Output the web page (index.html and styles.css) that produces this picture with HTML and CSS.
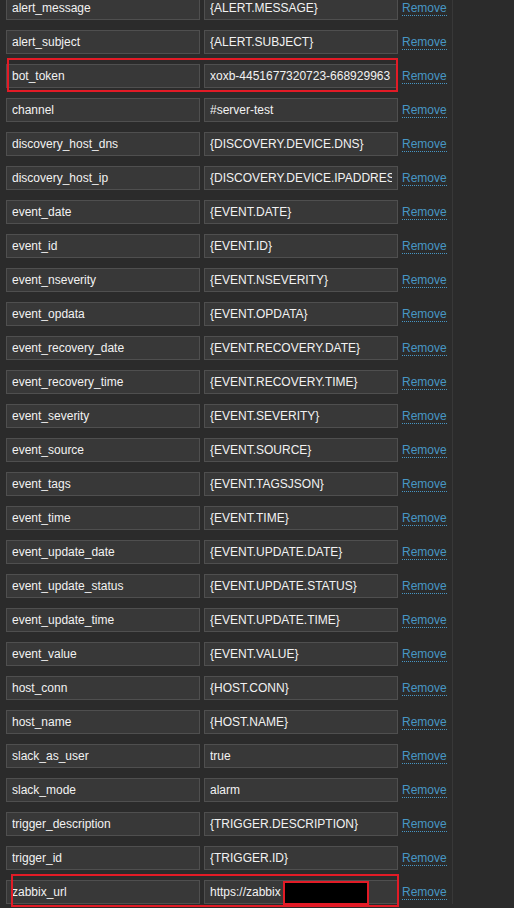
FILE: index.html
```html
<!DOCTYPE html>
<html lang="en">
<head>
<meta charset="utf-8">
<title>Macros</title>
<link rel="stylesheet" href="styles.css">
</head>
<body>
<div class="panel">
  <div class="list">
    <div class="row"><input class="field" type="text" value="alert_message"><input class="field" type="text" value="{ALERT.MESSAGE}"><a class="remove" href="#">Remove</a></div>
    <div class="row"><input class="field" type="text" value="alert_subject"><input class="field" type="text" value="{ALERT.SUBJECT}"><a class="remove" href="#">Remove</a></div>
    <div class="row"><input class="field" type="text" value="bot_token"><input class="field" type="text" value="xoxb-4451677320723-668929963"><a class="remove" href="#">Remove</a><span class="mark mark-token"></span></div>
    <div class="row"><input class="field" type="text" value="channel"><input class="field" type="text" value="#server-test"><a class="remove" href="#">Remove</a></div>
    <div class="row"><input class="field" type="text" value="discovery_host_dns"><input class="field" type="text" value="{DISCOVERY.DEVICE.DNS}"><a class="remove" href="#">Remove</a></div>
    <div class="row"><input class="field" type="text" value="discovery_host_ip"><input class="field" type="text" value="{DISCOVERY.DEVICE.IPADDRESS}"><a class="remove" href="#">Remove</a></div>
    <div class="row"><input class="field" type="text" value="event_date"><input class="field" type="text" value="{EVENT.DATE}"><a class="remove" href="#">Remove</a></div>
    <div class="row"><input class="field" type="text" value="event_id"><input class="field" type="text" value="{EVENT.ID}"><a class="remove" href="#">Remove</a></div>
    <div class="row"><input class="field" type="text" value="event_nseverity"><input class="field" type="text" value="{EVENT.NSEVERITY}"><a class="remove" href="#">Remove</a></div>
    <div class="row"><input class="field" type="text" value="event_opdata"><input class="field" type="text" value="{EVENT.OPDATA}"><a class="remove" href="#">Remove</a></div>
    <div class="row"><input class="field" type="text" value="event_recovery_date"><input class="field" type="text" value="{EVENT.RECOVERY.DATE}"><a class="remove" href="#">Remove</a></div>
    <div class="row"><input class="field" type="text" value="event_recovery_time"><input class="field" type="text" value="{EVENT.RECOVERY.TIME}"><a class="remove" href="#">Remove</a></div>
    <div class="row"><input class="field" type="text" value="event_severity"><input class="field" type="text" value="{EVENT.SEVERITY}"><a class="remove" href="#">Remove</a></div>
    <div class="row"><input class="field" type="text" value="event_source"><input class="field" type="text" value="{EVENT.SOURCE}"><a class="remove" href="#">Remove</a></div>
    <div class="row"><input class="field" type="text" value="event_tags"><input class="field" type="text" value="{EVENT.TAGSJSON}"><a class="remove" href="#">Remove</a></div>
    <div class="row"><input class="field" type="text" value="event_time"><input class="field" type="text" value="{EVENT.TIME}"><a class="remove" href="#">Remove</a></div>
    <div class="row"><input class="field" type="text" value="event_update_date"><input class="field" type="text" value="{EVENT.UPDATE.DATE}"><a class="remove" href="#">Remove</a></div>
    <div class="row"><input class="field" type="text" value="event_update_status"><input class="field" type="text" value="{EVENT.UPDATE.STATUS}"><a class="remove" href="#">Remove</a></div>
    <div class="row"><input class="field" type="text" value="event_update_time"><input class="field" type="text" value="{EVENT.UPDATE.TIME}"><a class="remove" href="#">Remove</a></div>
    <div class="row"><input class="field" type="text" value="event_value"><input class="field" type="text" value="{EVENT.VALUE}"><a class="remove" href="#">Remove</a></div>
    <div class="row"><input class="field" type="text" value="host_conn"><input class="field" type="text" value="{HOST.CONN}"><a class="remove" href="#">Remove</a></div>
    <div class="row"><input class="field" type="text" value="host_name"><input class="field" type="text" value="{HOST.NAME}"><a class="remove" href="#">Remove</a></div>
    <div class="row"><input class="field" type="text" value="slack_as_user"><input class="field" type="text" value="true"><a class="remove" href="#">Remove</a></div>
    <div class="row"><input class="field" type="text" value="slack_mode"><input class="field" type="text" value="alarm"><a class="remove" href="#">Remove</a></div>
    <div class="row"><input class="field" type="text" value="trigger_description"><input class="field" type="text" value="{TRIGGER.DESCRIPTION}"><a class="remove" href="#">Remove</a></div>
    <div class="row"><input class="field" type="text" value="trigger_id"><input class="field" type="text" value="{TRIGGER.ID}"><a class="remove" href="#">Remove</a></div>
    <div class="row"><input class="field" type="text" value="zabbix_url"><input class="field" type="text" value="https://zabbix"><a class="remove" href="#">Remove</a><span class="mark mark-url"></span><span class="redact"></span></div>
  </div>
</div>
</body>
</html>
```

FILE: styles.css
```css
html, body {
  margin: 0;
  padding: 0;
  background: #2b2b2b;
  height: 908px;
  overflow: hidden;
}

body {
  font-family: "Liberation Sans", Arial, sans-serif;
  font-size: 12px;
  color: #f2f2f2;
}

.panel {
  width: 452px;
  height: 908px;
  border-right: 1px solid #383838;
  box-sizing: content-box;
}

.list {
  display: flex;
  flex-direction: column;
  gap: 10px;
  padding-left: 6px;
  margin-top: -4px;
}

.row {
  position: relative;
  display: flex;
  align-items: center;
  gap: 4px;
  height: 24px;
}

.field {
  box-sizing: border-box;
  width: 194px;
  height: 24px;
  margin: 0;
  padding: 0 5px;
  background: #383838;
  border: 1px solid #4f4f4f;
  border-radius: 0;
  color: #f2f2f2;
  font-family: "Liberation Sans", Arial, sans-serif;
  font-size: 12px;
  outline: none;
}

.remove {
  color: #4796c4;
  text-decoration: none;
  border-bottom: 1px dotted #4796c4;
  line-height: 14px;
  font-size: 12px;
}

.mark {
  position: absolute;
  border: 2px solid #e21b26;
  box-sizing: border-box;
  pointer-events: none;
}

.mark-token {
  left: 1px;
  top: -6px;
  width: 391px;
  height: 34px;
}

.mark-url {
  left: 5px;
  top: -6px;
  width: 388px;
  height: 33px;
}

.redact {
  position: absolute;
  left: 277px;
  top: 1px;
  width: 86px;
  height: 24px;
  background: #000;
  border: 2px solid #e21b26;
  box-sizing: border-box;
}
```
